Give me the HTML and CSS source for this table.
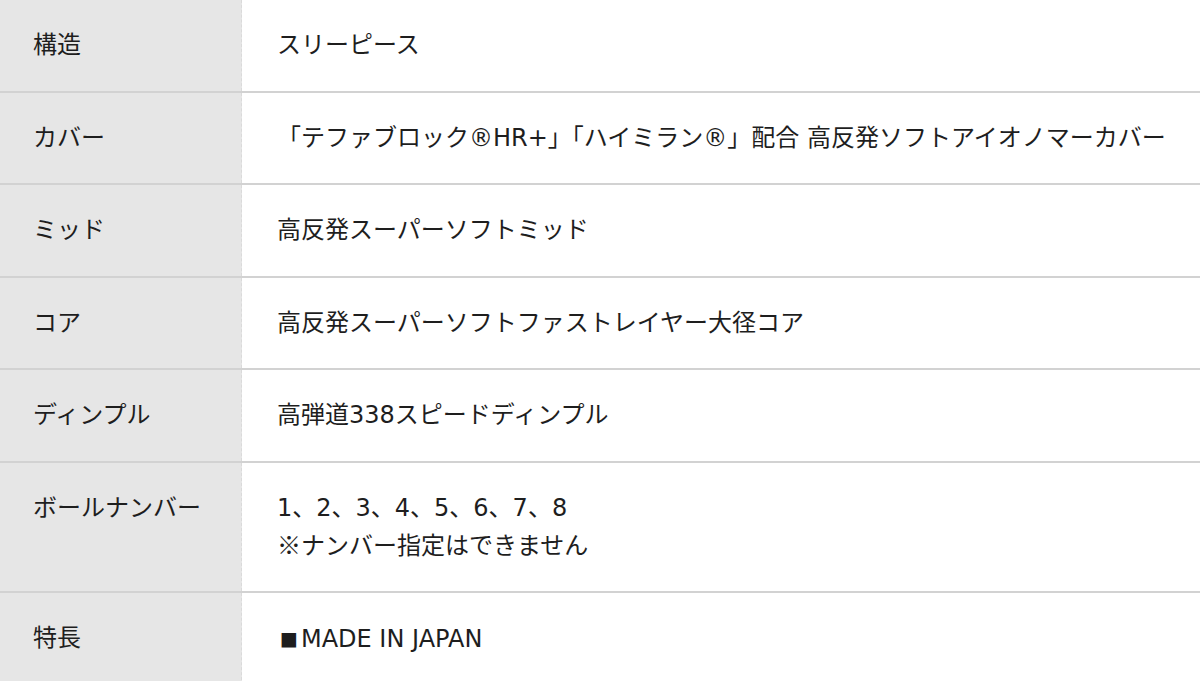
FILE: index.html
```html
<!DOCTYPE html>
<html lang="ja">
<head>
<meta charset="utf-8">
<link rel="stylesheet" href="styles.css">
</head>
<body>
<table class="spec">
  <tr><th>構造</th><td>スリーピース</td></tr>
  <tr><th>カバー</th><td>「テファブロック®HR+」「ハイミラン®」配合 高反発ソフトアイオノマーカバー</td></tr>
  <tr><th>ミッド</th><td>高反発スーパーソフトミッド</td></tr>
  <tr><th>コア</th><td>高反発スーパーソフトファストレイヤー大径コア</td></tr>
  <tr><th>ディンプル</th><td>高弾道338スピードディンプル</td></tr>
  <tr><th>ボールナンバー</th><td>1、2、3、4、5、6、7、8<br><span class="jp">※</span>ナンバー指定はできません</td></tr>
  <tr><th>特長</th><td><span class="sq">■</span>MADE IN JAPAN</td></tr>
</table>
</body>
</html>
```
FILE: styles.css
```css
html, body {
  margin: 0;
  padding: 0;
  background: #fff;
}
.spec {
  width: 1200px;
  border-collapse: collapse;
  font-family: "DejaVu Sans", "Noto Sans CJK JP", sans-serif;
  font-size: 24px;
  line-height: 36px;
  color: #1e1e1e;
}
.spec th,
.spec td {
  padding: 27px 0 27.5px;
  border-bottom: 2px solid #d2d2d2;
  vertical-align: top;
  text-align: left;
  font-weight: normal;
}
.spec th {
  width: 208px;
  padding-left: 33px;
  background: #e6e6e6;
  border-right: 1px dashed #dadada;
}
.spec td {
  padding-left: 35px;
  white-space: nowrap;
}
.spec tr:last-child th,
.spec tr:last-child td {
  border-bottom: none;
}
.jp {
  font-family: "Noto Sans CJK JP", sans-serif;
}
.sq {
  font-size: 19px;
  margin-left: 3px;
  margin-right: 3px;
  vertical-align: 2px;
}
```
